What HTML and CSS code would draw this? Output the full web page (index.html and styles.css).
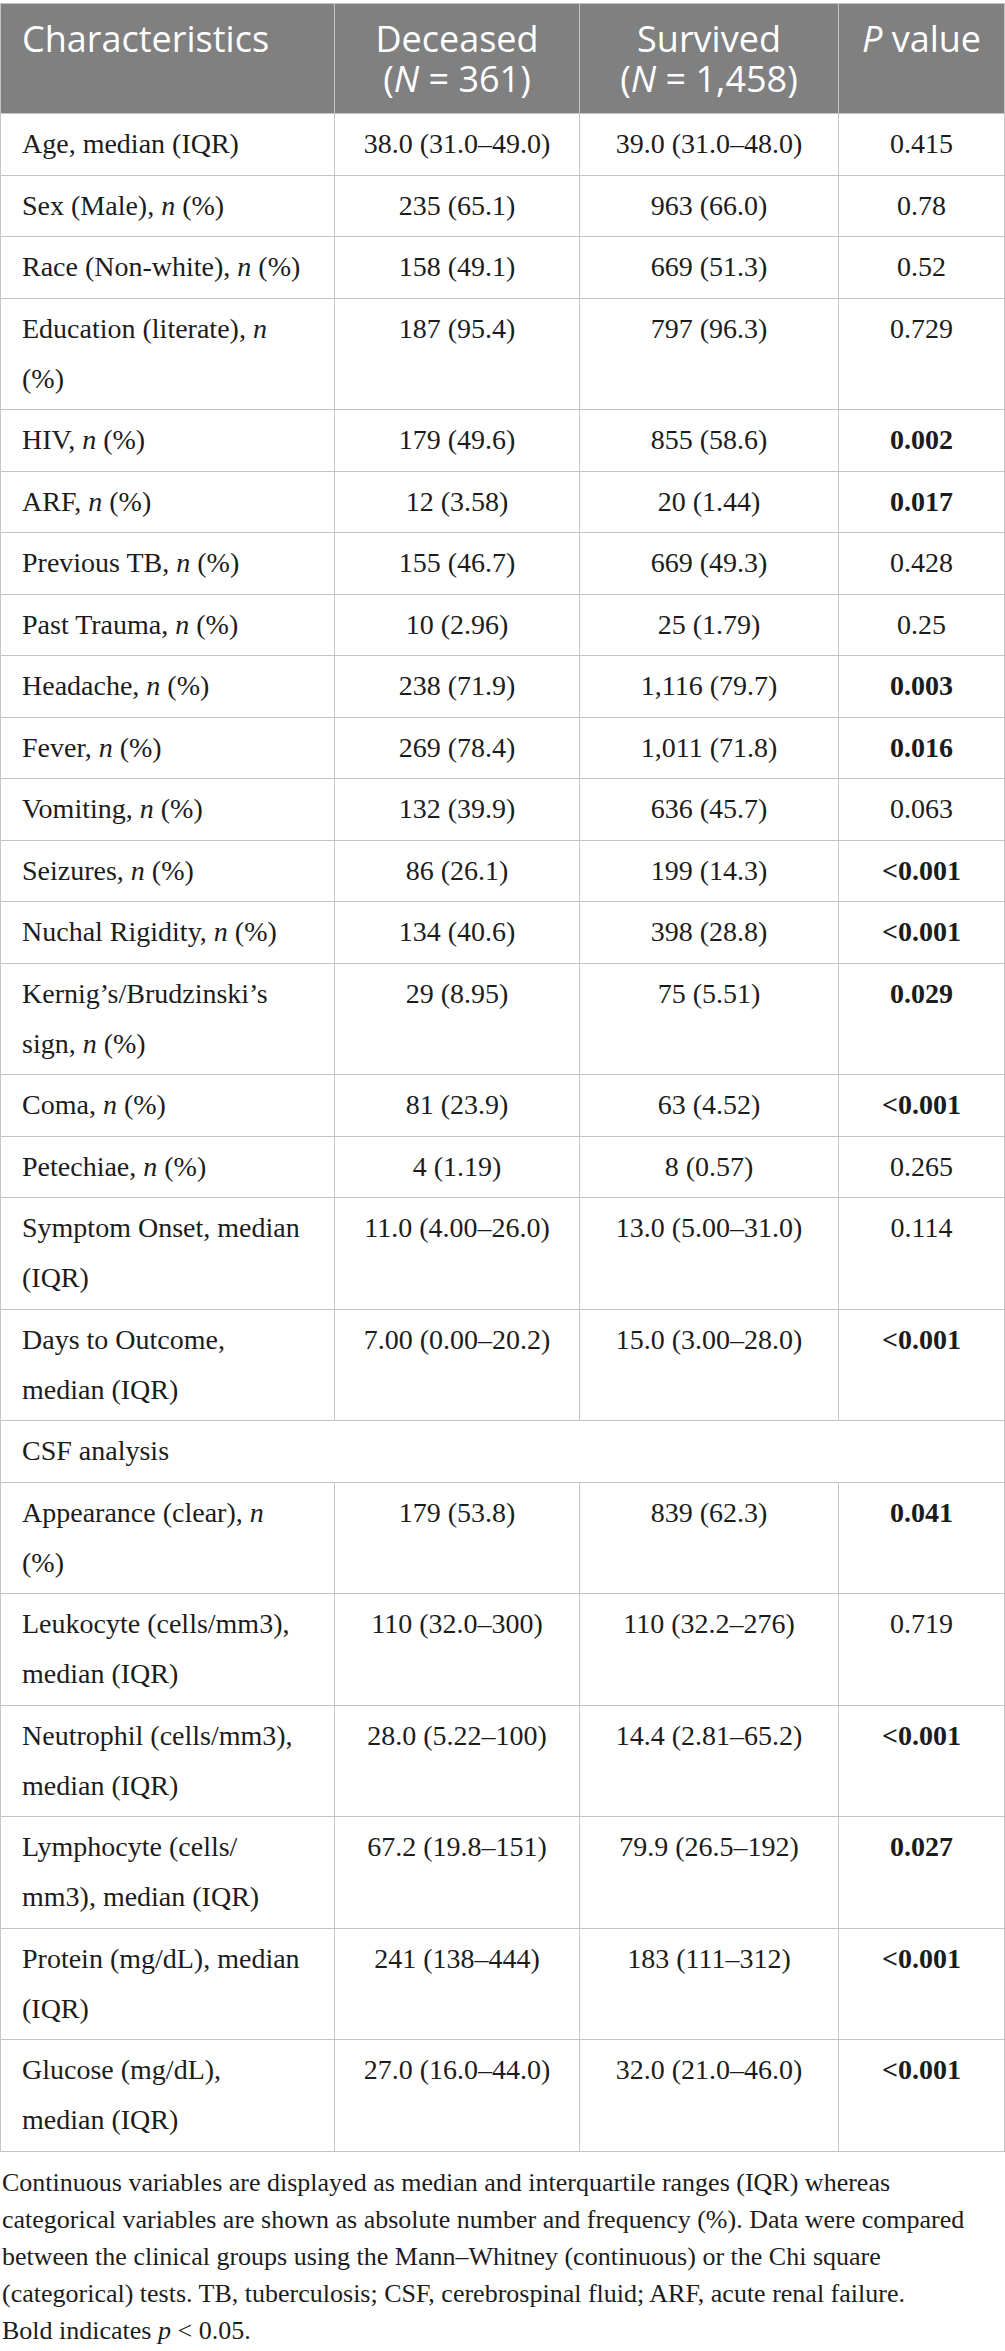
FILE: index.html
```
<!DOCTYPE html>
<html>
<head>
  <meta charset="utf-8">
  <title>Table - Deceased vs Survived</title>
  <link rel="stylesheet" href="styles.css">
</head>
<body>
  <table class="data">
    <colgroup>
      <col class="c-name">
      <col class="c-dec">
      <col class="c-sur">
      <col class="c-p">
    </colgroup>
    <thead>
      <tr>
        <th class="first">Characteristics</th>
        <th>Deceased<br>(<i>N</i> = 361)</th>
        <th>Survived<br>(<i>N</i> = 1,458)</th>
        <th><i>P</i> value</th>
      </tr>
    </thead>
    <tbody>
      <tr><td>Age, median (IQR)</td><td>38.0 (31.0–49.0)</td><td>39.0 (31.0–48.0)</td><td>0.415</td></tr>
      <tr><td>Sex (Male), <i>n</i> (%)</td><td>235 (65.1)</td><td>963 (66.0)</td><td>0.78</td></tr>
      <tr><td>Race (Non-white), <i>n</i> (%)</td><td>158 (49.1)</td><td>669 (51.3)</td><td>0.52</td></tr>
      <tr><td>Education (literate), <i>n</i><br>(%)</td><td>187 (95.4)</td><td>797 (96.3)</td><td>0.729</td></tr>
      <tr><td>HIV, <i>n</i> (%)</td><td>179 (49.6)</td><td>855 (58.6)</td><td><b>0.002</b></td></tr>
      <tr><td>ARF, <i>n</i> (%)</td><td>12 (3.58)</td><td>20 (1.44)</td><td><b>0.017</b></td></tr>
      <tr><td>Previous TB, <i>n</i> (%)</td><td>155 (46.7)</td><td>669 (49.3)</td><td>0.428</td></tr>
      <tr><td>Past Trauma, <i>n</i> (%)</td><td>10 (2.96)</td><td>25 (1.79)</td><td>0.25</td></tr>
      <tr><td>Headache, <i>n</i> (%)</td><td>238 (71.9)</td><td>1,116 (79.7)</td><td><b>0.003</b></td></tr>
      <tr><td>Fever, <i>n</i> (%)</td><td>269 (78.4)</td><td>1,011 (71.8)</td><td><b>0.016</b></td></tr>
      <tr><td>Vomiting, <i>n</i> (%)</td><td>132 (39.9)</td><td>636 (45.7)</td><td>0.063</td></tr>
      <tr><td>Seizures, <i>n</i> (%)</td><td>86 (26.1)</td><td>199 (14.3)</td><td><b>&lt;0.001</b></td></tr>
      <tr><td>Nuchal Rigidity, <i>n</i> (%)</td><td>134 (40.6)</td><td>398 (28.8)</td><td><b>&lt;0.001</b></td></tr>
      <tr><td>Kernig’s/Brudzinski’s<br>sign, <i>n</i> (%)</td><td>29 (8.95)</td><td>75 (5.51)</td><td><b>0.029</b></td></tr>
      <tr><td>Coma, <i>n</i> (%)</td><td>81 (23.9)</td><td>63 (4.52)</td><td><b>&lt;0.001</b></td></tr>
      <tr><td>Petechiae, <i>n</i> (%)</td><td>4 (1.19)</td><td>8 (0.57)</td><td>0.265</td></tr>
      <tr><td>Symptom Onset, median<br>(IQR)</td><td>11.0 (4.00–26.0)</td><td>13.0 (5.00–31.0)</td><td>0.114</td></tr>
      <tr><td>Days to Outcome,<br>median (IQR)</td><td>7.00 (0.00–20.2)</td><td>15.0 (3.00–28.0)</td><td><b>&lt;0.001</b></td></tr>
      <tr><td colspan="4">CSF analysis</td></tr>
      <tr><td>Appearance (clear), <i>n</i><br>(%)</td><td>179 (53.8)</td><td>839 (62.3)</td><td><b>0.041</b></td></tr>
      <tr><td>Leukocyte (cells/mm3),<br>median (IQR)</td><td>110 (32.0–300)</td><td>110 (32.2–276)</td><td>0.719</td></tr>
      <tr><td>Neutrophil (cells/mm3),<br>median (IQR)</td><td>28.0 (5.22–100)</td><td>14.4 (2.81–65.2)</td><td><b>&lt;0.001</b></td></tr>
      <tr><td>Lymphocyte (cells/<br>mm3), median (IQR)</td><td>67.2 (19.8–151)</td><td>79.9 (26.5–192)</td><td><b>0.027</b></td></tr>
      <tr><td>Protein (mg/dL), median<br>(IQR)</td><td>241 (138–444)</td><td>183 (111–312)</td><td><b>&lt;0.001</b></td></tr>
      <tr><td>Glucose (mg/dL),<br>median (IQR)</td><td>27.0 (16.0–44.0)</td><td>32.0 (21.0–46.0)</td><td><b>&lt;0.001</b></td></tr>
    </tbody>
  </table>

  <p class="note">
    Continuous variables are displayed as median and interquartile ranges (IQR) whereas<br>
    categorical variables are shown as absolute number and frequency (%). Data were compared<br>
    between the clinical groups using the Mann–Whitney (continuous) or the Chi square<br>
    (categorical) tests. TB, tuberculosis; CSF, cerebrospinal fluid; ARF, acute renal failure.<br>
    Bold indicates <i>p</i> &lt; 0.05.
  </p>
</body>
</html>
```

FILE: styles.css
```
body{
  margin: 0;
  padding-top: 3px;
  background: #fff;
  color: #1c1c1c;
  font-family: "Liberation Serif", "Times New Roman", serif;
}
.data{
  width: 1004px;
  table-layout: fixed;
  border-collapse: collapse;
  font-size: 28px;
  line-height: 50px;
}
.c-name{ width: 334px; }
.c-dec{ width: 245px; }
.c-sur{ width: 259px; }
.c-p{ width: 166px; }

.data th{
  background-color: #808080;
  color: #fff;
  font-family: "Open Sans", "Noto Sans", sans-serif;
  font-weight: normal;
  font-size: 36px;
  line-height: 40px;
  text-align: center;
  vertical-align: top;
  padding: 15px 10px 14px;
  border: 1px solid #c4c4c4;
}
.data th.first{
  text-align: left;
  padding-left: 21px;
}
.data td{
  padding: 5.25px 10px;
  border: 1px solid #c4c4c4;
  text-align: center;
  vertical-align: top;
}
.data td:first-child{
  text-align: left;
  padding-left: 21px;
}
.data b{
  font-weight: bold;
}
.note{
  margin: 12px 0 0 2px;
  font-size: 26px;
  line-height: 37px;
}
```
